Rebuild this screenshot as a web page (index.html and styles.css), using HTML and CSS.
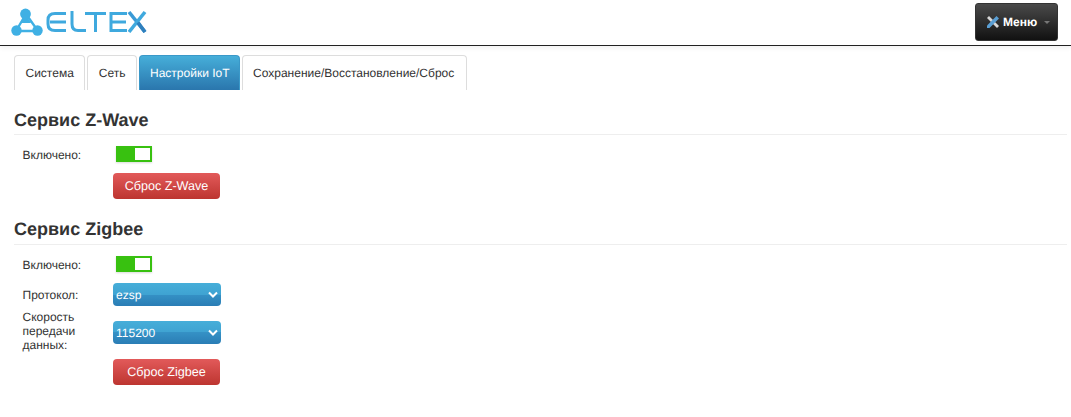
FILE: index.html
```html
<!DOCTYPE html>
<html lang="en">
<head>
    <meta charset="UTF-8">
    <title>Настройки IoT</title>
    <link rel="stylesheet" href="styles.css">
</head>
<body>
    <header class="topbar">
        <div class="logo">
            <svg class="logo__mark" width="36" height="30" viewBox="0 0 36 30">
                <path d="M15 6 L5 23 L27 23 Z" stroke="#3fb0e4" stroke-width="2.4" fill="none"/>
                <path d="M13 10 L17 10 L20 15 L10 15 Z" fill="#3fb0e4"/>
                <circle cx="14.500" cy="6" r="5.400" fill="#3fb0e4"/>
                <circle cx="5.500" cy="22.500" r="5.200" fill="#3fb0e4"/>
                <circle cx="26.500" cy="22.500" r="5.200" fill="#3fb0e4"/>
            </svg>
            <svg class="logo__word" width="104" height="30" viewBox="0 0 104 30">
                <g stroke="#3fa9de" stroke-width="3" fill="none">
                    <path d="M20 5.500 H9 Q2 5.500 2 12 V16 Q2 22.500 9 22.500 H20"/>
                    <path d="M4 14 H20"/>
                    <path d="M26 3 V16 Q26 22.500 32 22.500 H40"/>
                    <path d="M39 5.500 H60"/>
                    <path d="M49.500 5.500 V24"/>
                    <path d="M81 5.500 H65 V22.500 H81"/>
                    <path d="M65 14 H80"/>
                </g>
                <path d="M83 4 L99 24" stroke="#3a9ad6" stroke-width="3.600" fill="none"/>
                <path d="M99 4 L83 24" stroke="#3fa9de" stroke-width="3.600" fill="none"/>
                <path d="M92 14.500 L99 24" stroke="#2f7fbd" stroke-width="3.600" fill="none"/>
            </svg>
        </div>
        <div class="menu-btn">
            <svg width="14" height="14" viewBox="0 0 14 14">
                <path d="M1 3 L3 1 L13 11 L11 13 Z" fill="#d8d8d8"/>
                <path d="M13 3.500 L10.500 1 L1 10.500 L1 13 L3.500 13 Z" fill="#5a9fd4"/>
            </svg>
            <span>Меню</span>
            <i class="menu-btn__caret"></i>
        </div>
    </header>

    <main class="content">
        <ul class="tabs">
            <li class="tab">Система</li>
            <li class="tab">Сеть</li>
            <li class="tab tab--active">Настройки IoT</li>
            <li class="tab">Сохранение/Восстановление/Сброс</li>
        </ul>

        <section class="service">
            <h3 class="service__title">Сервис Z-Wave</h3>
            <div class="row">
                <label class="row__label row__label--switch">Включено:</label>
                <div class="switch"><div class="switch__knob"></div></div>
            </div>
            <div class="row">
                <div class="row__label"></div>
                <div class="btn-danger">Сброс Z-Wave</div>
            </div>
        </section>

        <section class="service">
            <h3 class="service__title service__title--tall">Сервис Zigbee</h3>
            <div class="row">
                <label class="row__label row__label--switch">Включено:</label>
                <div class="switch"><div class="switch__knob"></div></div>
            </div>
            <div class="row">
                <label class="row__label">Протокол:</label>
                <div class="select">ezsp
                    <svg class="select__arrow" width="10" height="7" viewBox="0 0 10 7"><path d="M1 1.500 L5 5.500 L9 1.500" stroke="#fff" stroke-width="2" fill="none"/></svg>
                </div>
            </div>
            <div class="row row--tall">
                <label class="row__label">Скорость передачи данных:</label>
                <div class="select">115200
                    <svg class="select__arrow" width="10" height="7" viewBox="0 0 10 7"><path d="M1 1.500 L5 5.500 L9 1.500" stroke="#fff" stroke-width="2" fill="none"/></svg>
                </div>
            </div>
            <div class="row row--after-tall">
                <div class="row__label"></div>
                <div class="btn-danger">Сброс Zigbee</div>
            </div>
        </section>
    </main>
</body>
</html>
```
FILE: styles.css
```css
html {
    height: 100%;
}

body {
    margin: 0;
    background: #fff;
    color: #333;
    font-family: "Liberation Sans", Arial, sans-serif;
    font-size: 12px;
    line-height: 14px;
    text-rendering: geometricPrecision;
}

.topbar {
    display: flex;
    justify-content: space-between;
    height: 45px;
    border-bottom: 1px solid #222;
    padding-left: 11px;
    padding-right: 13px;
    box-shadow: 0 2px 5px rgba(0, 0, 0, 0.06);
}

.logo {
    display: flex;
    align-items: flex-start;
    padding-top: 8px;
}

.logo__word {
    margin-left: -1px;
}

.menu-btn {
    display: flex;
    align-items: center;
    gap: 3px;
    width: 83px;
    height: 38px;
    margin-top: 3px;
    box-sizing: border-box;
    padding-left: 10px;
    border: 1px solid #333;
    border-radius: 3px;
    background: linear-gradient(#4a4a4a, #111);
    color: #fff;
    font-weight: bold;
    font-size: 12px;
}

.menu-btn__caret {
    width: 0;
    height: 0;
    margin-left: 4px;
    border-left: 3px solid transparent;
    border-right: 3px solid transparent;
    border-top: 3px solid #777;
}

.content {
    padding: 9px 4px 0 14px;
}

.tabs {
    display: flex;
    gap: 2px;
    list-style: none;
    margin: 0;
    padding: 0;
    height: 35px;
}

.tab {
    padding: 10px 10.500px 0;
    border: 1px solid #ddd;
    border-bottom: 0;
    border-radius: 4px 4px 0 0;
    color: #333;
}

.tab--active {
    padding: 10px 9px 0 10px;
    background: linear-gradient(#46aed9, #2a76ad);
    border-color: #3a98c8;
    color: #fff;
}

.tab:last-child {
    padding-right: 11.500px;
}

.service {
    padding-top: 19px;
}

.service__title {
    margin: 0;
    height: 25px;
    border-bottom: 1px solid #eee;
    font-size: 18px;
    line-height: 22px;
    font-weight: bold;
}

.service__title--tall {
    height: 26px;
}

.row {
    display: flex;
    align-items: center;
    margin-top: 11px;
}

.row--tall {
    align-items: flex-start;
    margin-top: 4px;
}

.row--tall .select {
    margin-top: 11px;
}

.row--after-tall {
    margin-top: 7px;
}

.row__label {
    width: 82.500px;
    padding-left: 8.500px;
    padding-right: 8px;
}

.row__label--switch {
    margin-top: 2px;
}

.switch {
    display: flex;
    justify-content: flex-end;
    width: 36px;
    height: 16px;
    margin-left: 3px;
    background: #38c110;
    box-shadow: 0 1px 2px rgba(0, 0, 0, 0.15);
}

.switch__knob {
    width: 15px;
    height: 12px;
    margin: 2px;
    background: #fff;
}

.btn-danger {
    display: flex;
    align-items: center;
    justify-content: center;
    width: 107px;
    height: 26px;
    border-radius: 4px;
    background: linear-gradient(#e25a5a, #bd3530);
    color: #fff;
    font-size: 12.600px;
}

.select {
    display: flex;
    align-items: center;
    justify-content: space-between;
    width: 108px;
    height: 23px;
    padding: 0 3px;
    box-sizing: border-box;
    border-radius: 4px;
    background: linear-gradient(#46aed9, #3fa3d2 50%, #3591c5 50%, #2a7db5);
    color: #fff;
}
```
